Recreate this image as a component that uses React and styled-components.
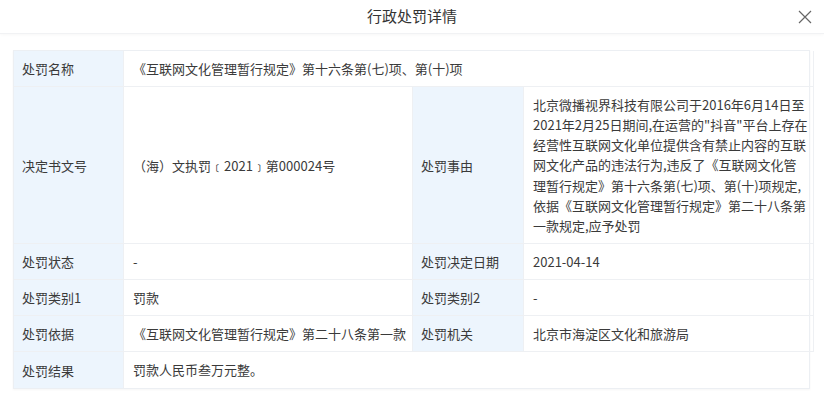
import React from "react";
import styled, { createGlobalStyle } from "styled-components";

const Global = createGlobalStyle`
  html, body { margin: 0; padding: 0; background: #fff; }
  body { font-family: "Noto Sans CJK SC", "Noto Sans", sans-serif; color: #333; }
  * { box-sizing: border-box; }
`;

const Dialog = styled.div`
  width: 824px;
  height: 400px;
  background: #fff;
  display: flex;
  flex-direction: column;
`;

const Header = styled.div`
  height: 34px;
  display: flex;
  align-items: center;
  justify-content: center;
  position: relative;
  border-bottom: 1px solid #f1f2f4;
  box-shadow: 0 1px 3px rgba(0, 0, 0, 0.03);
`;

const Title = styled.div`
  font-size: 15px;
  color: #333;
  line-height: 20px;
  margin-top: -2px;
`;

const Close = styled.button`
  position: absolute;
  right: 11px;
  top: 9px;
  width: 16px;
  height: 16px;
  padding: 0;
  border: none;
  background: none;
  display: flex;
  align-items: center;
  justify-content: center;
`;

const Body = styled.div`
  padding: 16px 14px 0 13px;
`;

const Table = styled.div`
  display: grid;
  grid-template-columns: 110px 289px 111px 1fr;
  border: 1px solid #eceff3;
  box-shadow: 0 1px 2px rgba(0, 0, 0, 0.04);
  font-size: 13px;
  color: #3a3a3a;
`;

const Label = styled.div`
  background: #edf5fd;
  padding: 0 8px;
  display: flex;
  align-items: center;
  height: ${(p) => (p.$tall ? "157px" : "36px")};
  border-bottom: ${(p) => (p.$last ? "none" : "1px solid #eef0f3")};
  border-right: 1px solid #eef0f3;
`;

const Value = styled.div`
  grid-column: ${(p) => (p.$span ? `span ${p.$span}` : "auto")};
  padding: ${(p) => (p.$multi ? "8px 6px 7px 9px" : "0 4px 0 9px")};
  display: flex;
  align-items: center;
  height: ${(p) => (p.$multi ? "157px" : "36px")};
  line-height: 20px;
  white-space: nowrap;
  border-bottom: ${(p) => (p.$last ? "none" : "1px solid #eef0f3")};
  border-right: 1px solid #eef0f3;
  &:last-child { border-right: none; }
`;

const Lines = styled.div`
  display: flex;
  flex-direction: column;
`;

const Line = styled.span`
  display: block;
  white-space: nowrap;
  line-height: 20.2px;
`;

const reason = [
  "北京微播视界科技有限公司于2016年6月14日至",
  "2021年2月25日期间,在运营的\"抖音\"平台上存在",
  "经营性互联网文化单位提供含有禁止内容的互联",
  "网文化产品的违法行为,违反了《互联网文化管",
  "理暂行规定》第十六条第(七)项、第(十)项规定,",
  "依据《互联网文化管理暂行规定》第二十八条第",
  "一款规定,应予处罚",
];

const CloseIcon = () => (
  <svg width="14" height="14" viewBox="0 0 14 14">
    <path d="M1 1 L13 13 M13 1 L1 13" stroke="#666" strokeWidth="1.2" fill="none" />
  </svg>
);

export default function App() {
  return (
    <>
      <Global />
      <Dialog>
        <Header>
          <Title>行政处罚详情</Title>
          <Close aria-label="close"><CloseIcon /></Close>
        </Header>
        <Body>
          <Table>
            <Label>处罚名称</Label>
            <Value $span={3}>《互联网文化管理暂行规定》第十六条第(七)项、第(十)项</Value>

            <Label $tall>决定书文号</Label>
            <Value $multi>（海）文执罚﹝2021﹞第000024号</Value>
            <Label $tall>处罚事由</Label>
            <Value $multi>
              <Lines>
                {reason.map((l, i) => (
                  <Line key={i}>{l}</Line>
                ))}
              </Lines>
            </Value>

            <Label>处罚状态</Label>
            <Value>-</Value>
            <Label>处罚决定日期</Label>
            <Value>2021-04-14</Value>

            <Label>处罚类别1</Label>
            <Value>罚款</Value>
            <Label>处罚类别2</Label>
            <Value>-</Value>

            <Label>处罚依据</Label>
            <Value>《互联网文化管理暂行规定》第二十八条第一款</Value>
            <Label>处罚机关</Label>
            <Value>北京市海淀区文化和旅游局</Value>

            <Label $last>处罚结果</Label>
            <Value $span={3} $last>罚款人民币叁万元整。</Value>
          </Table>
        </Body>
      </Dialog>
    </>
  );
}
